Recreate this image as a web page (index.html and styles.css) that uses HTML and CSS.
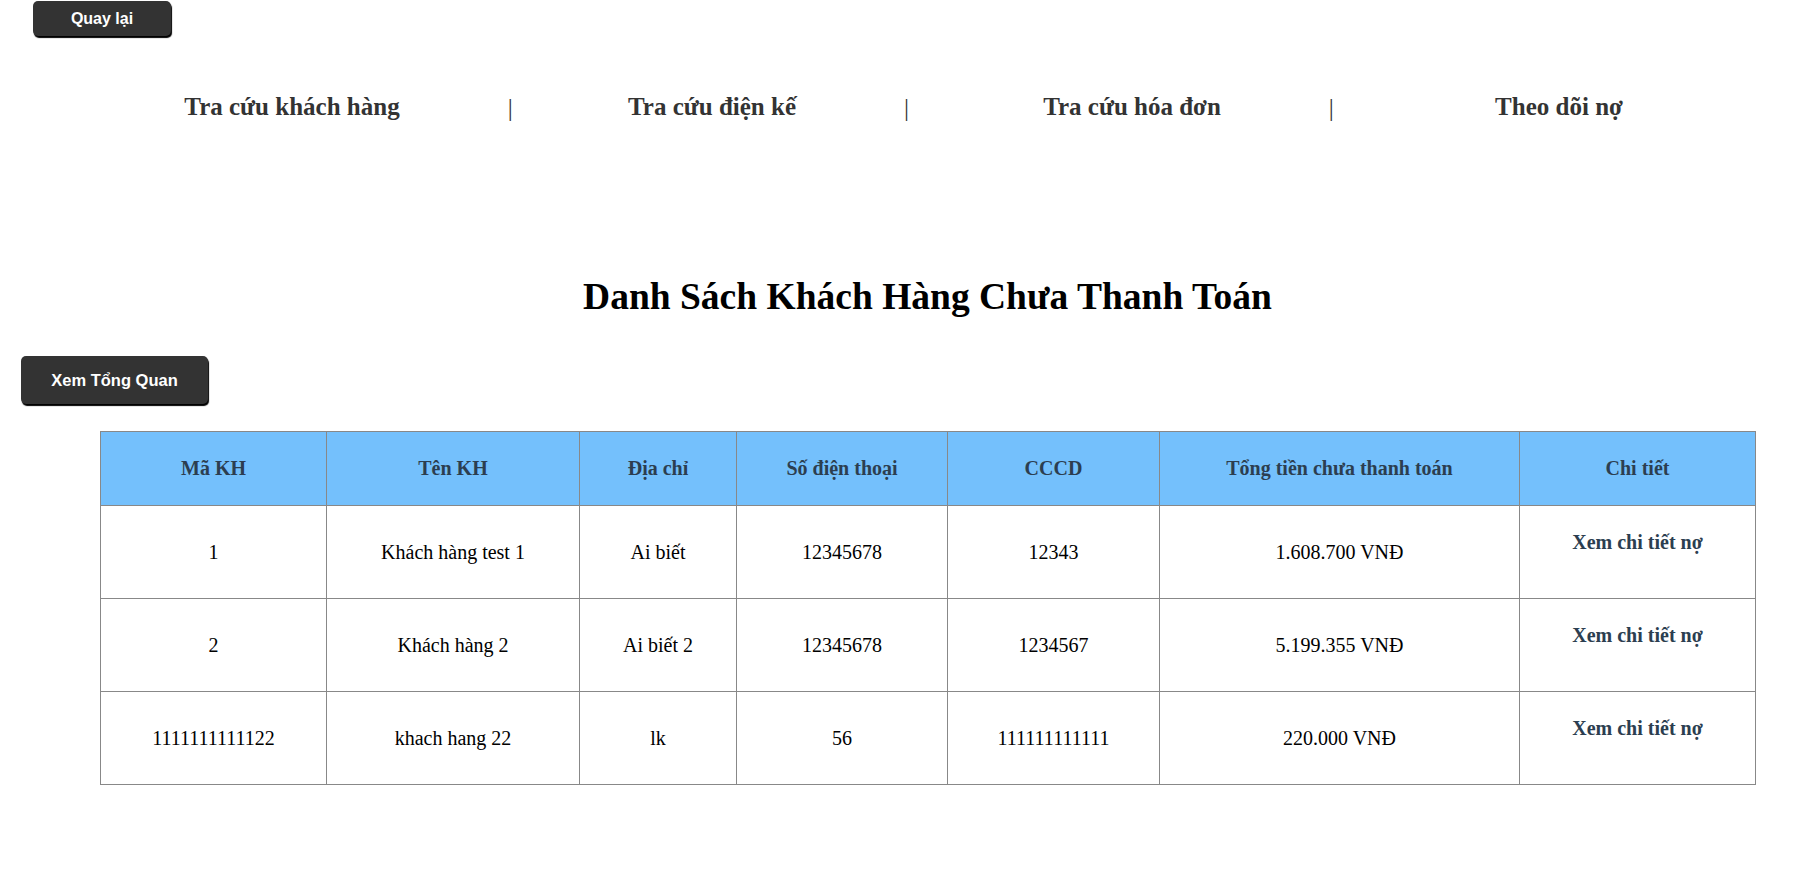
FILE: index.html
```html
<!DOCTYPE html>
<html lang="vi">
<head>
    <meta charset="UTF-8">
    <meta name="viewport" content="width=device-width, initial-scale=1.0">
    <title>Theo dõi nợ</title>
    <link rel="stylesheet" href="styles.css">
</head>
<body>
    <header class="top-bar">
        <button class="btn btn-back">Quay lại</button>

        <nav class="main-nav">
            <div class="nav-item"><a href="#" class="nav-link">Tra cứu khách hàng</a></div>
            <div class="nav-item"><a href="#" class="nav-link">Tra cứu điện kế</a></div>
            <div class="nav-item"><a href="#" class="nav-link">Tra cứu hóa đơn</a></div>
            <div class="nav-item"><a href="#" class="nav-link last">Theo dõi nợ</a></div>
        </nav>
    </header>

    <main class="debt-page">
        <h1 class="page-title">Danh Sách Khách Hàng Chưa Thanh Toán</h1>

        <button class="btn btn-overview">Xem Tổng Quan</button>

        <table class="debt-table">
            <colgroup>
                <col class="col-id">
                <col class="col-name">
                <col class="col-address">
                <col class="col-phone">
                <col class="col-cccd">
                <col class="col-total">
                <col class="col-detail">
            </colgroup>
            <thead>
                <tr>
                    <th>Mã KH</th>
                    <th>Tên KH</th>
                    <th>Địa chỉ</th>
                    <th>Số điện thoại</th>
                    <th>CCCD</th>
                    <th>Tổng tiền chưa thanh toán</th>
                    <th>Chi tiết</th>
                </tr>
            </thead>
            <tbody>
                <tr>
                    <td>1</td>
                    <td>Khách hàng test 1</td>
                    <td>Ai biết</td>
                    <td>12345678</td>
                    <td>12343</td>
                    <td>1.608.700 VNĐ</td>
                    <td><a href="#" class="detail-link">Xem chi tiết nợ</a></td>
                </tr>
                <tr>
                    <td>2</td>
                    <td>Khách hàng 2</td>
                    <td>Ai biết 2</td>
                    <td>12345678</td>
                    <td>1234567</td>
                    <td>5.199.355 VNĐ</td>
                    <td><a href="#" class="detail-link">Xem chi tiết nợ</a></td>
                </tr>
                <tr>
                    <td>1111111111122</td>
                    <td>khach hang 22</td>
                    <td>lk</td>
                    <td>56</td>
                    <td>111111111111</td>
                    <td>220.000 VNĐ</td>
                    <td><a href="#" class="detail-link">Xem chi tiết nợ</a></td>
                </tr>
            </tbody>
        </table>
    </main>
</body>
</html>
```

FILE: styles.css
```css
* {
    box-sizing: border-box;
}
body {
    margin: 0;
    font-family: "Liberation Serif", "Times New Roman", serif;
    color: #000;
    background: #fff;
}

/* nút chung */
.btn {
    display: block;
    font-family: "Liberation Sans", Arial, sans-serif;
    font-weight: bold;
    font-size: 16px;
    color: #fff;
    background: #333;
    border: none;
    border-radius: 5px;
    box-shadow: 1px 2px 1px #000;
    cursor: pointer;
}

/* thanh trên cùng */
.top-bar {
    padding-top: 1px;
}
.btn-back {
    margin-left: 33px;
    width: 138px;
    height: 35px;
    padding: 0;
}
.main-nav {
    display: grid;
    grid-template-columns: repeat(3, 420px) 434px;
    margin: 56px 0 0 82px;
}
.nav-item {
    text-align: center;
    font-size: 25px;
    line-height: 29px;
}
.nav-link {
    position: relative;
    font-weight: bold;
    color: #333;
    text-decoration: none;
}
.nav-link::after {
    content: "|";
    position: absolute;
    left: calc(100% + 108px);
    top: 0;
    font-weight: normal;
    color: #333;
}
.nav-link.last::after {
    content: none;
}

/* danh sách nợ */
.debt-page {
    padding: 0 21px 60px;
}
.page-title {
    margin: 154px 0 0;
    padding-left: 42px;
    font-size: 37.5px;
    line-height: 43px;
    text-align: center;
}
.btn-overview {
    margin-top: 38px;
    width: 187px;
    height: 48px;
    padding: 0;
    font-size: 16.5px;
}

.debt-table {
    width: 1655px;
    margin: 27px 0 0 79px;
    border-collapse: collapse;
    table-layout: fixed;
}
.col-id { width: 226px; }
.col-name { width: 253px; }
.col-address { width: 157px; }
.col-phone { width: 211px; }
.col-cccd { width: 212px; }
.col-total { width: 360px; }
.col-detail { width: 236px; }

.debt-table th,
.debt-table td {
    border: 1px solid #888;
    padding: 25px 10px;
    text-align: center;
    vertical-align: middle;
}
.debt-table th {
    background: #74c0fc;
    color: #2c3e50;
    font-size: 20px;
    line-height: 23px;
}
.debt-table td {
    font-size: 20px;
    line-height: 23px;
    height: 93px;
}
.detail-link {
    display: block;
    margin-bottom: 19px;
    font-size: 20px;
    line-height: 23px;
    font-weight: bold;
    color: #2c3e50;
    text-decoration: none;
}
```
